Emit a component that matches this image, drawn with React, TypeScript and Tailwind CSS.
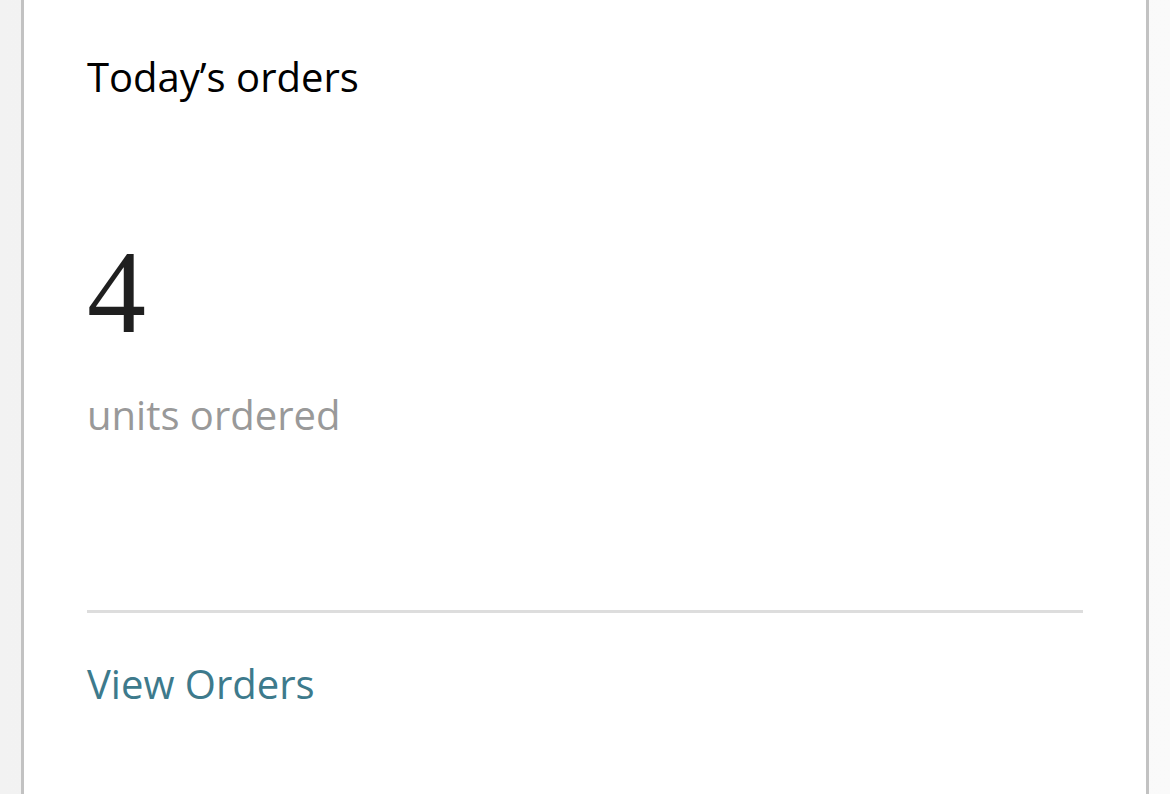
export default function App() {
    return (
        <div className="h-[794px] w-full overflow-hidden bg-gradient-to-r from-[#f2f2f2] to-[#fafafa] px-[21px]">
            <div className="flex h-full flex-col border-x-[3px] border-[#c2c2c2] bg-white px-[63px] font-['Open_Sans',sans-serif]">
                <h2 className="mt-[50px] text-[40px] leading-[54px] text-black">Today’s orders</h2>
                <div className="mt-[130px] font-['Liberation_Serif',serif] text-[118px] leading-[118px] text-[#1f1f1f]">4</div>
                <div className="mt-[36px] text-[40px] leading-[54px] text-[#999]">units ordered</div>
                <div className="mt-[168px] h-[3px] bg-[#dddddd]" />
                <a className="mt-[44px] text-[40px] leading-[54px] text-[#3d7a8c]" href="#">
                    View Orders
                </a>
            </div>
        </div>
    );
}
